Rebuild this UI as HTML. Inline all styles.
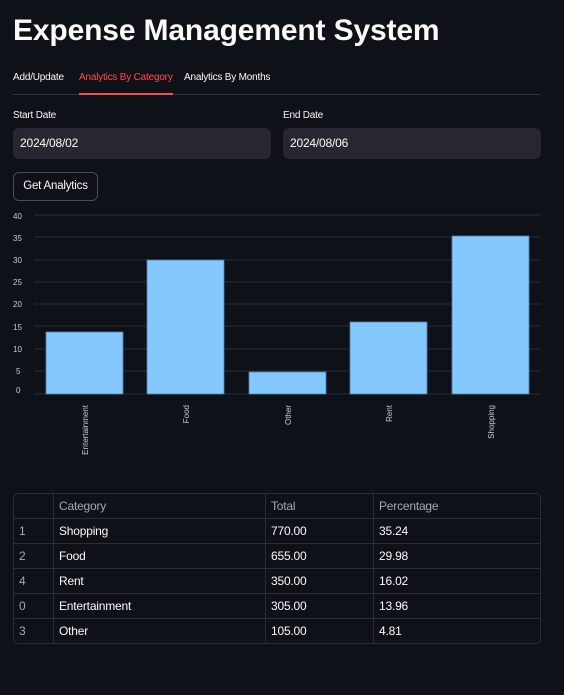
<!DOCTYPE html>
<html><head><meta charset="utf-8"><style>
body{margin:0;background:#0e1117;width:564px;height:695px;overflow:hidden;font-family:"Liberation Sans",sans-serif;color:#fafafa;position:relative}
.a{position:absolute}
h1{position:absolute;left:13px;top:14px;margin:0;font-size:30px;font-weight:bold;letter-spacing:-0.15px}
.tab{position:absolute;top:72px;font-size:10px;letter-spacing:-0.2px}
.inp{position:absolute;top:128px;height:31px;width:258px;background:#262730;border-radius:6px;font-size:12px;line-height:31px;text-indent:7px;letter-spacing:-0.2px}
.lbl{position:absolute;top:110px;font-size:10px;letter-spacing:-0.2px}
table{position:absolute;left:13px;top:493px;width:528px;border-collapse:separate;border-spacing:0;border:1px solid #2b2d35;border-radius:5px;font-size:12px;letter-spacing:-0.2px}
td{height:24px;border-right:1px solid #2b2d35;border-bottom:1px solid #2b2d35;padding:0 5px}
tr:last-child td{border-bottom:none}
td:last-child{border-right:none}
.h td{color:#a3a8b4}
td.i{color:#a3a8b4;width:29px}
</style></head><body>
<h1>Expense Management System</h1>
<div class="tab" style="left:13px">Add/Update</div>
<div class="tab" style="left:79px;color:#ff4b4b">Analytics By Category</div>
<div class="tab" style="left:184px">Analytics By Months</div>
<div class="a" style="left:13px;top:94px;width:528px;height:1px;background:#31333b"></div>
<div class="a" style="left:79px;top:93px;width:94px;height:2px;background:#ff4b4b"></div>
<div class="lbl" style="left:13px">Start Date</div>
<div class="lbl" style="left:283px">End Date</div>
<div class="inp" style="left:13px">2024/08/02</div>
<div class="inp" style="left:283px">2024/08/06</div>
<div class="a" style="left:13px;top:172px;width:85px;height:29px;border:1px solid #4a4c55;border-radius:6px;box-sizing:border-box;font-size:11.5px;line-height:27px;text-align:center;letter-spacing:-0.2px">Get Analytics</div>
<svg class="a" style="left:0;top:205px" width="564" height="270">
<g stroke="#262a33" stroke-width="1">
<line x1="34" x2="541" y1="10" y2="10"/><line x1="34" x2="541" y1="32" y2="32"/><line x1="34" x2="541" y1="55" y2="55"/><line x1="34" x2="541" y1="77" y2="77"/><line x1="34" x2="541" y1="99" y2="99"/><line x1="34" x2="541" y1="121" y2="121"/><line x1="34" x2="541" y1="144" y2="144"/><line x1="34" x2="541" y1="166" y2="166"/><line x1="34" x2="541" y1="189" y2="189"/>
</g>
<g fill="#c8ccd4" font-size="8" font-family="Liberation Sans">
<text x="13" y="14">40</text><text x="13" y="36">35</text><text x="13" y="58">30</text><text x="13" y="80">25</text><text x="13" y="102">20</text><text x="13" y="125">15</text><text x="13" y="147">10</text><text x="16" y="169">5</text><text x="16" y="188">0</text>
</g>
<g fill="#83c9ff" stroke="#4b7fa8" stroke-width="0.8">
<rect x="46" y="127" width="77" height="62"/><rect x="147" y="55" width="77" height="134"/><rect x="249" y="167" width="77" height="22"/><rect x="350" y="117" width="77" height="72"/><rect x="452" y="31" width="77" height="158"/>
</g>
<g fill="#c8ccd4" font-size="8" font-family="Liberation Sans" text-anchor="end">
<text transform="translate(88,200) rotate(-90)">Entertainment</text>
<text transform="translate(189,200) rotate(-90)">Food</text>
<text transform="translate(291,200) rotate(-90)">Other</text>
<text transform="translate(392,200) rotate(-90)">Rent</text>
<text transform="translate(494,200) rotate(-90)">Shopping</text>
</g>
</svg>
<table>
<tr class="h"><td class="i"></td><td style="width:201px">Category</td><td style="width:97px">Total</td><td>Percentage</td></tr>
<tr><td class="i">1</td><td>Shopping</td><td>770.00</td><td>35.24</td></tr>
<tr><td class="i">2</td><td>Food</td><td>655.00</td><td>29.98</td></tr>
<tr><td class="i">4</td><td>Rent</td><td>350.00</td><td>16.02</td></tr>
<tr><td class="i">0</td><td>Entertainment</td><td>305.00</td><td>13.96</td></tr>
<tr><td class="i">3</td><td>Other</td><td>105.00</td><td>4.81</td></tr>
</table>
</body></html>
